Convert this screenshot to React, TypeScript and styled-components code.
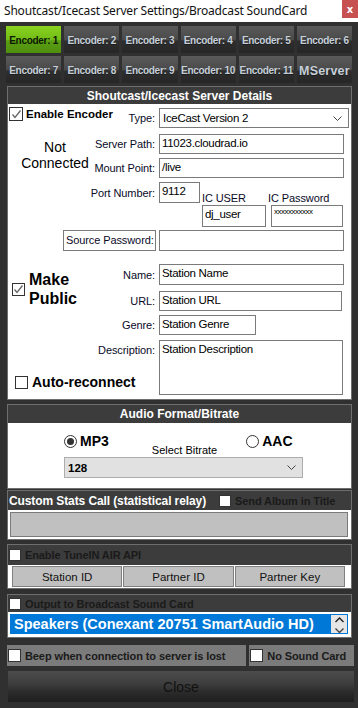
import styled, { createGlobalStyle } from "styled-components";

const GlobalStyle = createGlobalStyle`
  html, body {
    margin: 0;
    padding: 0;
    background: #303030;
  }
  body {
    font-family: "Liberation Sans", Arial, sans-serif;
  }
  * {
    box-sizing: border-box;
  }
`;

const Window = styled.div`
  width: 358px;
  height: 708px;
  display: flex;
  flex-direction: column;
  background: #303030;
  overflow: hidden;
`;

const TitleBar = styled.div`
  height: 22px;
  flex-shrink: 0;
  background: #fff;
  display: flex;
  justify-content: space-between;
  align-items: flex-start;
`;

const Title = styled.div`
  font-family: "Noto Sans", "Liberation Sans", sans-serif;
  font-size: 12px;
  letter-spacing: -0.2px;
  color: #111;
  padding: 2px 0 0 4px;
  white-space: nowrap;
`;

const CloseX = styled.div`
  width: 16px;
  height: 18px;
  background: #c75050;
  color: #fff;
  font: bold 10px "DejaVu Sans", sans-serif;
  display: flex;
  align-items: center;
  justify-content: center;
`;

const Body = styled.div`
  flex: 1;
  padding: 4px 5px 0 6px;
  display: flex;
  flex-direction: column;
`;

const EncoderGrid = styled.div`
  display: grid;
  grid-template-columns: repeat(6, 1fr);
  grid-auto-rows: 27px;
  gap: 3px;
  margin-right: 1px;
`;

const EncoderButton = styled.div<{ $active?: boolean; $big?: boolean }>`
  display: flex;
  align-items: center;
  justify-content: center;
  padding-top: 2px;
  white-space: nowrap;
  background: ${({ $active }) =>
    $active
      ? "linear-gradient(#8ad21f, #72bd18 50%, #5a9e12 55%, #4f8f0f)"
      : "linear-gradient(#5a5a5a, #4a4a4a 50%, #2e2e2e 56%, #262626)"};
  color: ${({ $active }) => ($active ? "#0c1800" : "#c6d0da")};
  font-family: "Liberation Sans", Arial, sans-serif;
  font-weight: bold;
  font-size: ${({ $big }) => ($big ? "12.5px" : "10px")};
  letter-spacing: ${({ $big }) => ($big ? "0.2px" : "-0.3px")};
  text-shadow: ${({ $active }) => ($active ? "none" : "0 1px 0 #1a1a1a")};
`;

const Panel = styled.div<{ $top?: number }>`
  margin: ${({ $top }) => $top ?? 0}px 1px 0 1px;
  border: 1px solid #6e6e6e;
  background: #3c3c3c;
`;

const PanelHeader = styled.div<{ $h: number }>`
  height: ${({ $h }) => $h}px;
  display: flex;
  align-items: center;
  justify-content: center;
  color: #fff;
  font-weight: bold;
  font-size: 12px;
`;

const BarHeader = styled.div<{ $h: number }>`
  height: ${({ $h }) => $h}px;
  display: flex;
  align-items: center;
  padding-left: 1px;
  gap: 4px;
`;

const BarTitle = styled.span`
  color: #fff;
  font-weight: bold;
  font-size: 12px;
  letter-spacing: -0.1px;
  margin-right: 9px;
  white-space: nowrap;
`;

const DarkLabel = styled.span`
  color: #1a1a1a;
  font-weight: bold;
  font-size: 11px;
  letter-spacing: -0.1px;
  white-space: nowrap;
`;

const ServerGrid = styled.div`
  height: 295px;
  background: #fff;
  display: grid;
  grid-template-columns: 84px 59px 1fr;
  grid-template-rows: 24px 26px 24px 49px 24px 34px 26px 24px 60px;
  column-gap: 4px;
`;

const FieldLabel = styled.div<{ $row: number; $start?: boolean }>`
  grid-column: 2;
  grid-row: ${({ $row }) => $row};
  align-self: ${({ $start }) => ($start ? "start" : "end")};
  margin-top: ${({ $start }) => ($start ? "5px" : "0")};
  height: 20px;
  display: flex;
  align-items: center;
  justify-content: flex-end;
  white-space: nowrap;
  font-size: 11px;
  letter-spacing: -0.1px;
  color: #0a0a28;
`;

const Field = styled.div<{ $w: number; $h?: number }>`
  width: ${({ $w }) => $w}px;
  height: ${({ $h }) => $h ?? 20}px;
  border: 1px solid #7a7a7a;
  background: #fff;
  font-size: 11.5px;
  letter-spacing: -0.3px;
  color: #000;
  padding: 2px 0 0 2px;
  white-space: nowrap;
  overflow: hidden;
`;

const FieldCell = styled.div<{ $row: number }>`
  grid-column: 3;
  grid-row: ${({ $row }) => $row};
  align-self: end;
`;

const SelectField = styled(Field)`
  display: flex;
  justify-content: space-between;
  align-items: center;
  padding: 0 6px 0 3px;
`;

const EnableCell = styled.div`
  grid-column: 1 / 3;
  grid-row: 1;
  align-self: start;
  margin: 3px 0 0 1px;
  display: flex;
  align-items: center;
  gap: 3px;
  font-weight: bold;
  font-size: 11.5px;
  color: #000;
  white-space: nowrap;
`;

const Status = styled.div`
  grid-column: 1;
  grid-row: 2 / 4;
  align-self: start;
  margin: 11px 0 0 10px;
  text-align: center;
  font-size: 14px;
  line-height: 16px;
  color: #000;
`;

const PortBlock = styled.div`
  grid-column: 3;
  grid-row: 4;
  align-self: end;
  display: flex;
  gap: 2px;
`;

const IcColumn = styled.div<{ $indent?: number }>`
  display: flex;
  flex-direction: column;
  margin-top: 10px;
  font-size: 11px;
  color: #0a0a28;
  > div:last-child {
    margin-left: ${({ $indent }) => $indent ?? 0}px;
  }
`;

const IcLabel = styled.div`
  height: 13px;
  line-height: 13px;
  white-space: nowrap;
  letter-spacing: -0.1px;
`;

const Stars = styled.span`
  font-size: 8px;
  letter-spacing: -0.5px;
  vertical-align: top;
  line-height: 8px;
`;

const SourceLabel = styled.div`
  grid-column: 1 / 3;
  grid-row: 5;
  justify-self: end;
  align-self: end;
  margin-right: -1px;
  width: 93px;
  height: 21px;
  border: 1px solid #7a7a7a;
  font-size: 11px;
  letter-spacing: -0.1px;
  padding: 3px 0 0 2px;
  color: #0a0a28;
  white-space: nowrap;
`;

const PublicCell = styled.div`
  grid-column: 1;
  grid-row: 6 / 8;
  align-self: start;
  margin: 19px 0 0 4px;
  display: flex;
  align-items: center;
  gap: 4px;
  font-weight: bold;
  font-size: 16px;
  line-height: 19px;
  color: #000;
`;

const ReconnectCell = styled.div`
  grid-column: 1 / 3;
  grid-row: 9;
  align-self: end;
  margin: 0 0 5px 7px;
  display: flex;
  align-items: center;
  gap: 4px;
  font-weight: bold;
  font-size: 14px;
  color: #000;
  white-space: nowrap;
`;

const CheckBox = styled.span<{ $size?: number }>`
  flex-shrink: 0;
  width: ${({ $size }) => $size ?? 13}px;
  height: ${({ $size }) => $size ?? 13}px;
  background: #fff;
  border: 1px solid #333;
  display: inline-flex;
  align-items: center;
  justify-content: center;
`;

const AudioBody = styled.div`
  height: 65px;
  background: #fff;
  padding: 10px 0 0 56px;
`;

const RadioRow = styled.div`
  display: flex;
  align-items: flex-start;
  height: 24px;
`;

const RadioOption = styled.div<{ $ml?: number }>`
  display: flex;
  align-items: center;
  gap: 3px;
  margin-left: ${({ $ml }) => $ml ?? 0}px;
  font-weight: bold;
  font-size: 14px;
  color: #000;
`;

const Radio = styled.span<{ $on?: boolean }>`
  width: 13px;
  height: 13px;
  border-radius: 50%;
  border: 1px solid #333;
  background: #fff;
  display: inline-flex;
  align-items: center;
  justify-content: center;
  &::after {
    content: "";
    width: 7px;
    height: 7px;
    border-radius: 50%;
    background: ${({ $on }) => ($on ? "#333" : "transparent")};
  }
`;

const SmallCaption = styled.div`
  margin: 11px 0 0 43px;
  font-size: 11px;
  color: #000;
  white-space: nowrap;
`;

const BitrateSelect = styled.div`
  width: 239px;
  height: 21px;
  background: #e1e1e1;
  border: 1px solid #adadad;
  display: flex;
  align-items: center;
  justify-content: space-between;
  padding: 0 6px 0 3px;
  font-weight: bold;
  font-size: 11.5px;
  color: #000;
`;

const StatsBody = styled.div`
  height: 29px;
  background: #fff;
  padding: 2px 3px 0 2px;
`;

const GrayBox = styled.div`
  height: 25px;
  background: #c0c0c0;
  border: 1px solid #7a7a7a;
`;

const TuneBody = styled.div`
  height: 23px;
  background: #fff;
  padding: 1px 6px 0 4px;
  display: grid;
  grid-template-columns: repeat(3, 1fr);
  gap: 1px;
`;

const TuneButton = styled.div`
  height: 21px;
  background: #c0c0c0;
  border: 1px solid #808080;
  display: flex;
  align-items: center;
  justify-content: center;
  font-size: 11.5px;
  color: #111;
`;

const OutputBody = styled.div`
  height: 25px;
  background: #fff;
  padding: 2px 3px 0 2px;
`;

const DeviceList = styled.div`
  height: 20px;
  background: #0078d7;
  display: flex;
  align-items: center;
  justify-content: space-between;
  padding: 0 1px 0 4px;
  color: #fff;
  font-weight: bold;
  font-size: 14.5px;
  white-space: nowrap;
`;

const Spin = styled.div`
  width: 16px;
  height: 18px;
  background: #e6e6e6;
  display: flex;
  flex-direction: column;
  align-items: center;
  justify-content: space-between;
  padding: 2px 0 0;
  overflow: hidden;
`;

const OptionsRow = styled.div`
  display: flex;
  gap: 3px;
  margin: 7px -1px 0 1px;
  height: 21px;
`;

const OptionBox = styled.div<{ $w: number }>`
  width: ${({ $w }) => $w}px;
  background: #7b7b7b;
  display: flex;
  align-items: center;
  gap: 4px;
  padding-left: 1px;
`;

const CloseButton = styled.div`
  margin: 5px -1px 0 2px;
  height: 31px;
  display: flex;
  align-items: center;
  justify-content: center;
  background: linear-gradient(#4c4c4c, #3e3e3e 40%, #2a2a2a 70%, #1e1e1e);
  color: #111;
  font-size: 14px;
`;

const Chevron = () => (
  <svg width="9" height="5" viewBox="0 0 9 5">
    <polyline points="0.5,0.5 4.5,4.5 8.5,0.5" fill="none" stroke="#444" strokeWidth="1" />
  </svg>
);

const Tick = () => (
  <svg width="11" height="11" viewBox="0 0 11 11">
    <polyline points="1.5,5.5 4,8.5 9.5,1.5" fill="none" stroke="#666" strokeWidth="1.3" />
  </svg>
);

const encoders = [
  "Encoder: 1",
  "Encoder: 2",
  "Encoder: 3",
  "Encoder: 4",
  "Encoder: 5",
  "Encoder: 6",
  "Encoder: 7",
  "Encoder: 8",
  "Encoder: 9",
  "Encoder: 10",
  "Encoder: 11",
];

const App = () => {
  return (
    <Window>
      <GlobalStyle />
      <TitleBar>
        <Title>Shoutcast/Icecast Server Settings/Broadcast SoundCard</Title>
        <CloseX>x</CloseX>
      </TitleBar>
      <Body>
        <EncoderGrid>
          {encoders.map((name, i) => (
            <EncoderButton key={name} $active={i === 0}>
              {name}
            </EncoderButton>
          ))}
          <EncoderButton $big>MServer</EncoderButton>
        </EncoderGrid>

        <Panel $top={3}>
          <PanelHeader $h={17}>Shoutcast/Icecast Server Details</PanelHeader>
          <ServerGrid>
            <EnableCell>
              <CheckBox $size={14}>
                <Tick />
              </CheckBox>
              Enable Encoder
            </EnableCell>
            <FieldLabel $row={1}>Type:</FieldLabel>
            <FieldCell $row={1}>
              <SelectField $w={190}>
                IceCast Version 2
                <Chevron />
              </SelectField>
            </FieldCell>

            <Status>
              Not
              <br />
              Connected
            </Status>
            <FieldLabel $row={2}>Server Path:</FieldLabel>
            <FieldCell $row={2}>
              <Field $w={185}>11023.cloudrad.io</Field>
            </FieldCell>
            <FieldLabel $row={3}>Mount Point:</FieldLabel>
            <FieldCell $row={3}>
              <Field $w={185}>/live</Field>
            </FieldCell>

            <FieldLabel $row={4} $start>
              Port Number:
            </FieldLabel>
            <PortBlock>
              <Field $w={41} $h={21} style={{ alignSelf: "flex-start" }}>
                9112
              </Field>
              <IcColumn>
                <IcLabel>IC USER</IcLabel>
                <Field $w={64} $h={22}>
                  dj_user
                </Field>
              </IcColumn>
              <IcColumn $indent={3}>
                <IcLabel>IC Password</IcLabel>
                <Field $w={72} $h={22}>
                  <Stars>xxxxxxxxxxx</Stars>
                </Field>
              </IcColumn>
            </PortBlock>

            <SourceLabel>Source Password:</SourceLabel>
            <FieldCell $row={5}>
              <Field $w={185} $h={21} />
            </FieldCell>

            <PublicCell>
              <CheckBox>
                <Tick />
              </CheckBox>
              <span>
                Make
                <br />
                Public
              </span>
            </PublicCell>
            <FieldLabel $row={6}>Name:</FieldLabel>
            <FieldCell $row={6}>
              <Field $w={185} $h={21}>
                Station Name
              </Field>
            </FieldCell>
            <FieldLabel $row={7}>URL:</FieldLabel>
            <FieldCell $row={7}>
              <Field $w={183}>Station URL</Field>
            </FieldCell>
            <FieldLabel $row={8}>Genre:</FieldLabel>
            <FieldCell $row={8}>
              <Field $w={97}>Station Genre</Field>
            </FieldCell>
            <FieldLabel $row={9} $start>
              Description:
            </FieldLabel>
            <FieldCell $row={9}>
              <Field $w={184} $h={55}>
                Station Description
              </Field>
            </FieldCell>
            <ReconnectCell>
              <CheckBox />
              Auto-reconnect
            </ReconnectCell>
          </ServerGrid>
        </Panel>

        <Panel $top={4}>
          <PanelHeader $h={18}>Audio Format/Bitrate</PanelHeader>
          <AudioBody>
            <RadioRow>
              <RadioOption>
                <Radio $on />
                MP3
              </RadioOption>
              <SmallCaption>Select Bitrate</SmallCaption>
              <RadioOption $ml={29}>
                <Radio />
                AAC
              </RadioOption>
            </RadioRow>
            <BitrateSelect>
              128
              <Chevron />
            </BitrateSelect>
          </AudioBody>
        </Panel>

        <Panel $top={1}>
          <BarHeader $h={19}>
            <BarTitle>Custom Stats Call (statistical relay)</BarTitle>
            <CheckBox $size={12} />
            <DarkLabel>Send Album in Title</DarkLabel>
          </BarHeader>
          <StatsBody>
            <GrayBox />
          </StatsBody>
        </Panel>

        <Panel $top={4}>
          <BarHeader $h={20}>
            <CheckBox $size={12} />
            <DarkLabel>Enable TuneIN AIR API</DarkLabel>
          </BarHeader>
          <TuneBody>
            <TuneButton>Station ID</TuneButton>
            <TuneButton>Partner ID</TuneButton>
            <TuneButton>Partner Key</TuneButton>
          </TuneBody>
        </Panel>

        <Panel $top={5}>
          <BarHeader $h={17}>
            <CheckBox $size={12} />
            <DarkLabel>Output to Broadcast Sound Card</DarkLabel>
          </BarHeader>
          <OutputBody>
            <DeviceList>
              Speakers (Conexant 20751 SmartAudio HD)
              <Spin>
                <svg width="9" height="6" viewBox="0 0 9 6">
                  <polyline points="0.5,5 4.5,1 8.5,5" fill="none" stroke="#222" strokeWidth="1.4" />
                </svg>
                <svg width="9" height="5" viewBox="0 0 9 5">
                  <polyline points="0.5,0.5 4.5,4.5 8.5,0.5" fill="none" stroke="#444" strokeWidth="1.4" />
                </svg>
              </Spin>
            </DeviceList>
          </OutputBody>
        </Panel>

        <OptionsRow>
          <OptionBox $w={240}>
            <CheckBox />
            <DarkLabel>Beep when connection to server is lost</DarkLabel>
          </OptionBox>
          <OptionBox $w={105}>
            <CheckBox />
            <DarkLabel>No Sound Card</DarkLabel>
          </OptionBox>
        </OptionsRow>

        <CloseButton>Close</CloseButton>
      </Body>
    </Window>
  );
};

export default App;
